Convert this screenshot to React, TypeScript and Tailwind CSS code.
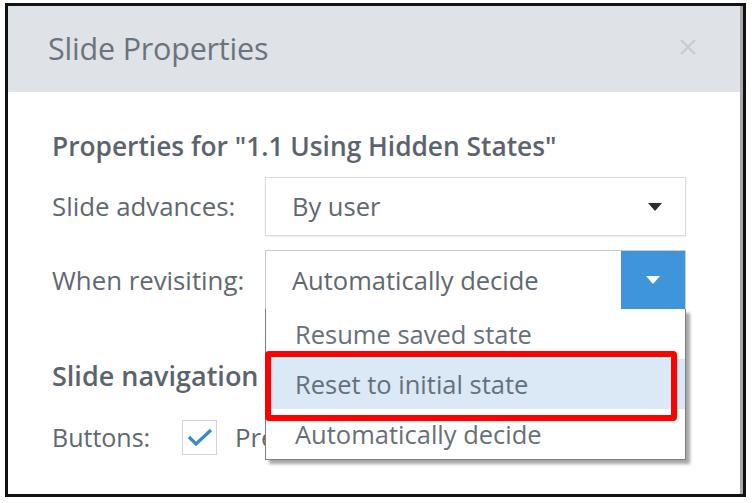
import React from "react";

const font = { fontFamily: '"Open Sans", "Noto Sans", sans-serif' };

const Caret = ({ color }: { color: string }) => (
  <svg width="14" height="8" viewBox="0 0 14 8">
    <path d="M0 0 L14 0 L7 8 Z" fill={color} />
  </svg>
);

const options = ["Resume saved state", "Reset to initial state", "Automatically decide"];

export default function App() {
  return (
    <div className="w-[752px] h-[503px] bg-white pt-[3px] pl-[5px]" style={font}>
      <div className="w-[741px] h-[494px] border-[3px] border-[#111] flex">
        <div className="flex-1 flex flex-col border-r-[3px] border-[#a9a9a9] bg-white">
          {/* header */}
          <div className="h-[86px] bg-[#dfe3e7] flex items-center justify-between pl-[40px] pr-[43px]">
            <h1 className="text-[30.5px] text-[#6b747d] tracking-[-0.2px]">Slide Properties</h1>
            <svg width="18" height="18" viewBox="0 0 18 18" className="mb-[4px]">
              <path d="M2 2 L16 16 M16 2 L2 16" stroke="#c9cdd2" strokeWidth="2.4" />
            </svg>
          </div>

          {/* body */}
          <div className="flex flex-col pl-[44px]">
            <h2 className="mt-[38px] h-[32px] leading-[32px] text-[26.3px] font-semibold text-[#5b646e] whitespace-nowrap">
              Properties for "1.1 Using Hidden States"
            </h2>

            <div className="mt-[15px] flex items-center">
              <span className="w-[213px] text-[25.8px] text-[#5f6871]">Slide advances:</span>
              <div className="w-[421px] h-[59px] border border-[#d7dbdf] shadow-[0_1px_2px_rgba(0,0,0,0.08)] flex items-center justify-between pl-[26px] pr-[23px]">
                <span className="text-[25.5px] text-[#5f6871]">By user</span>
                <Caret color="#2b2b2b" />
              </div>
            </div>

            <div className="mt-[14px] flex items-center relative z-10">
              <span className="w-[213px] text-[25.8px] text-[#5f6871]">When revisiting:</span>
              <div className="relative w-[421px] h-[60px] border border-[#c9cdd1] border-b-[#8a8a8a] flex items-stretch">
                <span className="flex-1 flex items-center pl-[26px] text-[25.5px] text-[#5f6871]">
                  Automatically decide
                </span>
                <span className="w-[64px] bg-[#3e95d9] flex items-center justify-center">
                  <Caret color="#ffffff" />
                </span>

                {/* open list */}
                <div className="absolute left-[-1px] top-full w-[421px] bg-white border border-[#7f7f7f] border-t-0 shadow-[4px_4px_3px_rgba(0,0,0,0.35)]">
                  {options.map((o, i) => (
                    <div
                      key={o}
                      className={`h-[50px] flex items-center pl-[29px] text-[25.5px] text-[#66707a] ${
                        i === 1 ? "bg-[#dbe8f5]" : ""
                      }`}
                    >
                      {o}
                    </div>
                  ))}
                  <div className="absolute left-[-1px] top-[42px] w-[412px] h-[70px] border-[6px] border-[#ff0000] rounded-[4px]" />
                </div>
              </div>
            </div>

            <h2 className="mt-[50px] h-[32px] leading-[32px] text-[27px] font-semibold text-[#5b646e]">
              Slide navigation
            </h2>

            <div className="mt-[26px] flex items-center">
              <span className="w-[130px] text-[25px] text-[#5f6871]">Buttons:</span>
              <span className="w-[35px] h-[35px] border border-[#d3d6d9] flex items-center justify-center">
                <svg width="26" height="18" viewBox="0 0 26 18">
                  <path d="M2 9 L9 16 L24 2" fill="none" stroke="#3a8acb" strokeWidth="3.2" />
                </svg>
              </span>
              <span className="ml-[18px] text-[25.8px] text-[#5f6871]">Pre</span>
            </div>
          </div>
        </div>
      </div>
    </div>
  );
}
